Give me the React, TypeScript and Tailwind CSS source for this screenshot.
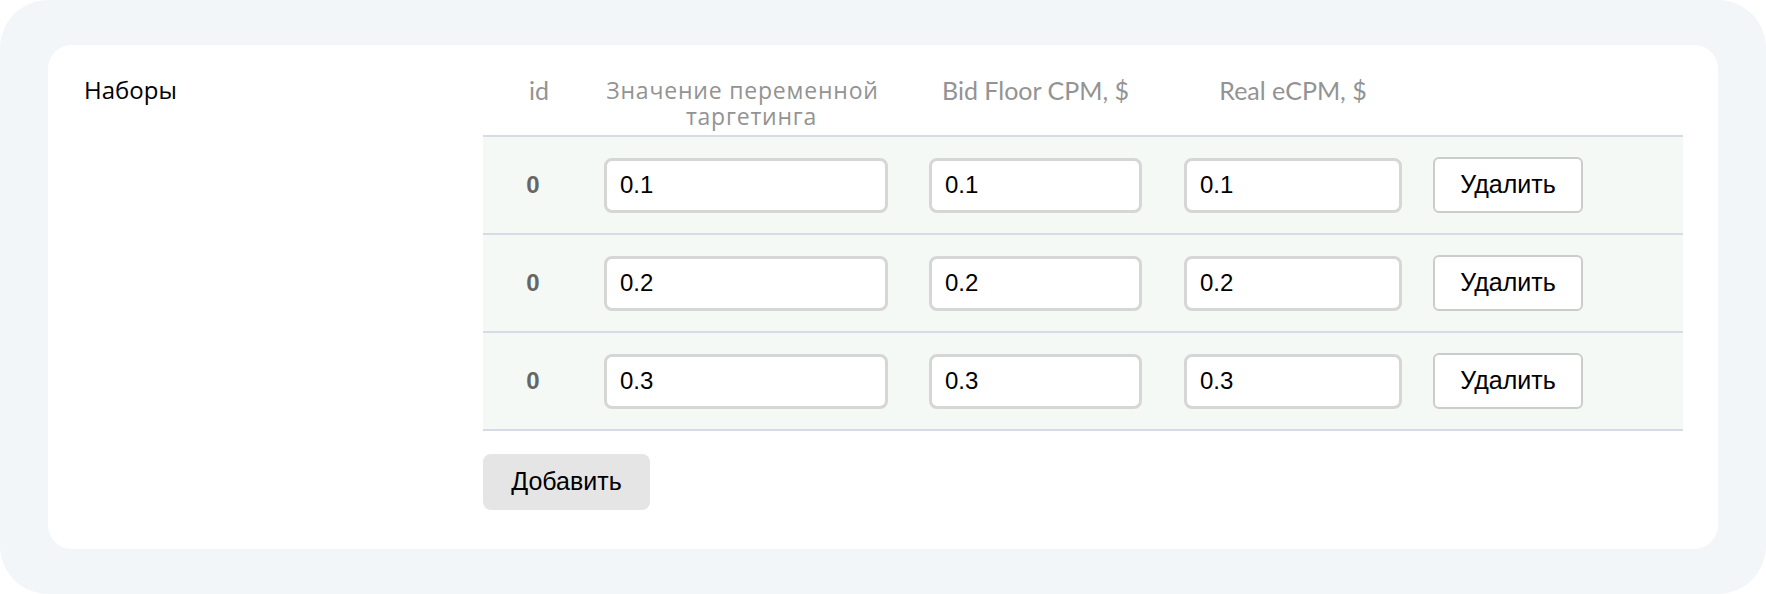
const ROWS = ['0.1', '0.2', '0.3'];

function Header() {
  return (
    <div className="flex h-[58px] items-start text-[25px] leading-[26px] text-[#939393] font-['Lato','Open_Sans',sans-serif]">
      <div className="w-[112px] text-center">id</div>
      <div className="w-[313px] text-center text-[23px] leading-[26px] font-['Open_Sans',sans-serif] tracking-[0.8px]">
        <div className="mr-[18px]">Значение переменной</div>
        <div>таргетинга</div>
      </div>
      <div className="w-[255px] text-center">Bid Floor CPM, $</div>
      <div className="w-[260px] text-center">Real eCPM, $</div>
    </div>
  );
}

function ValueInput({ value, width }: { value: string; width: string }) {
  return (
    <input
      defaultValue={value}
      className={`${width} h-[55px] rounded-[8px] border-[3px] border-[#d6d6d6] bg-white px-[13px] text-[24px] text-black outline-none font-['Liberation_Sans',Arial,sans-serif]`}
    />
  );
}

function Row({ value }: { value: string }) {
  return (
    <div className="flex h-[98px] items-center border-t-2 border-[#d7dbe6] bg-[#f4f9f6]">
      <div className="w-[100px] text-center text-[24px] font-bold text-[#666] font-['Liberation_Sans',Arial,sans-serif]">
        0
      </div>
      <div className="w-[325px] pl-[21px]">
        <ValueInput value={value} width="w-[284px]" />
      </div>
      <div className="w-[255px] pl-[21px]">
        <ValueInput value={value} width="w-[213px]" />
      </div>
      <div className="w-[260px] pl-[21px]">
        <ValueInput value={value} width="w-[218px]" />
      </div>
      <div className="w-[260px] pl-[10px]">
        <button className="h-[56px] w-[150px] rounded-[6px] border-2 border-[#cacdca] bg-white text-[25px] text-black font-['Liberation_Sans',Arial,sans-serif]">
          Удалить
        </button>
      </div>
    </div>
  );
}

export default function App() {
  return (
    <div className="h-[594px] w-[1766px] bg-white">
      <div className="h-full w-full rounded-[48px] bg-[#f3f6f9] px-[48px] py-[45px]">
        <div className="flex h-full rounded-[24px] bg-white pl-[36px] pt-[32px]">
          <div className="w-[399px] text-[24px] leading-[26px] text-black font-['Open_Sans',sans-serif]">
            Наборы
          </div>
          <div className="w-[1200px]">
            <Header />
            <div className="border-b-2 border-[#d7dbe6]">
              {ROWS.map(v => (
                <Row key={v} value={v} />
              ))}
            </div>
            <button className="mt-[23px] h-[56px] w-[167px] rounded-[8px] bg-[#e5e5e5] text-[25px] text-black font-['Liberation_Sans',Arial,sans-serif]">
              Добавить
            </button>
          </div>
        </div>
      </div>
    </div>
  );
}
